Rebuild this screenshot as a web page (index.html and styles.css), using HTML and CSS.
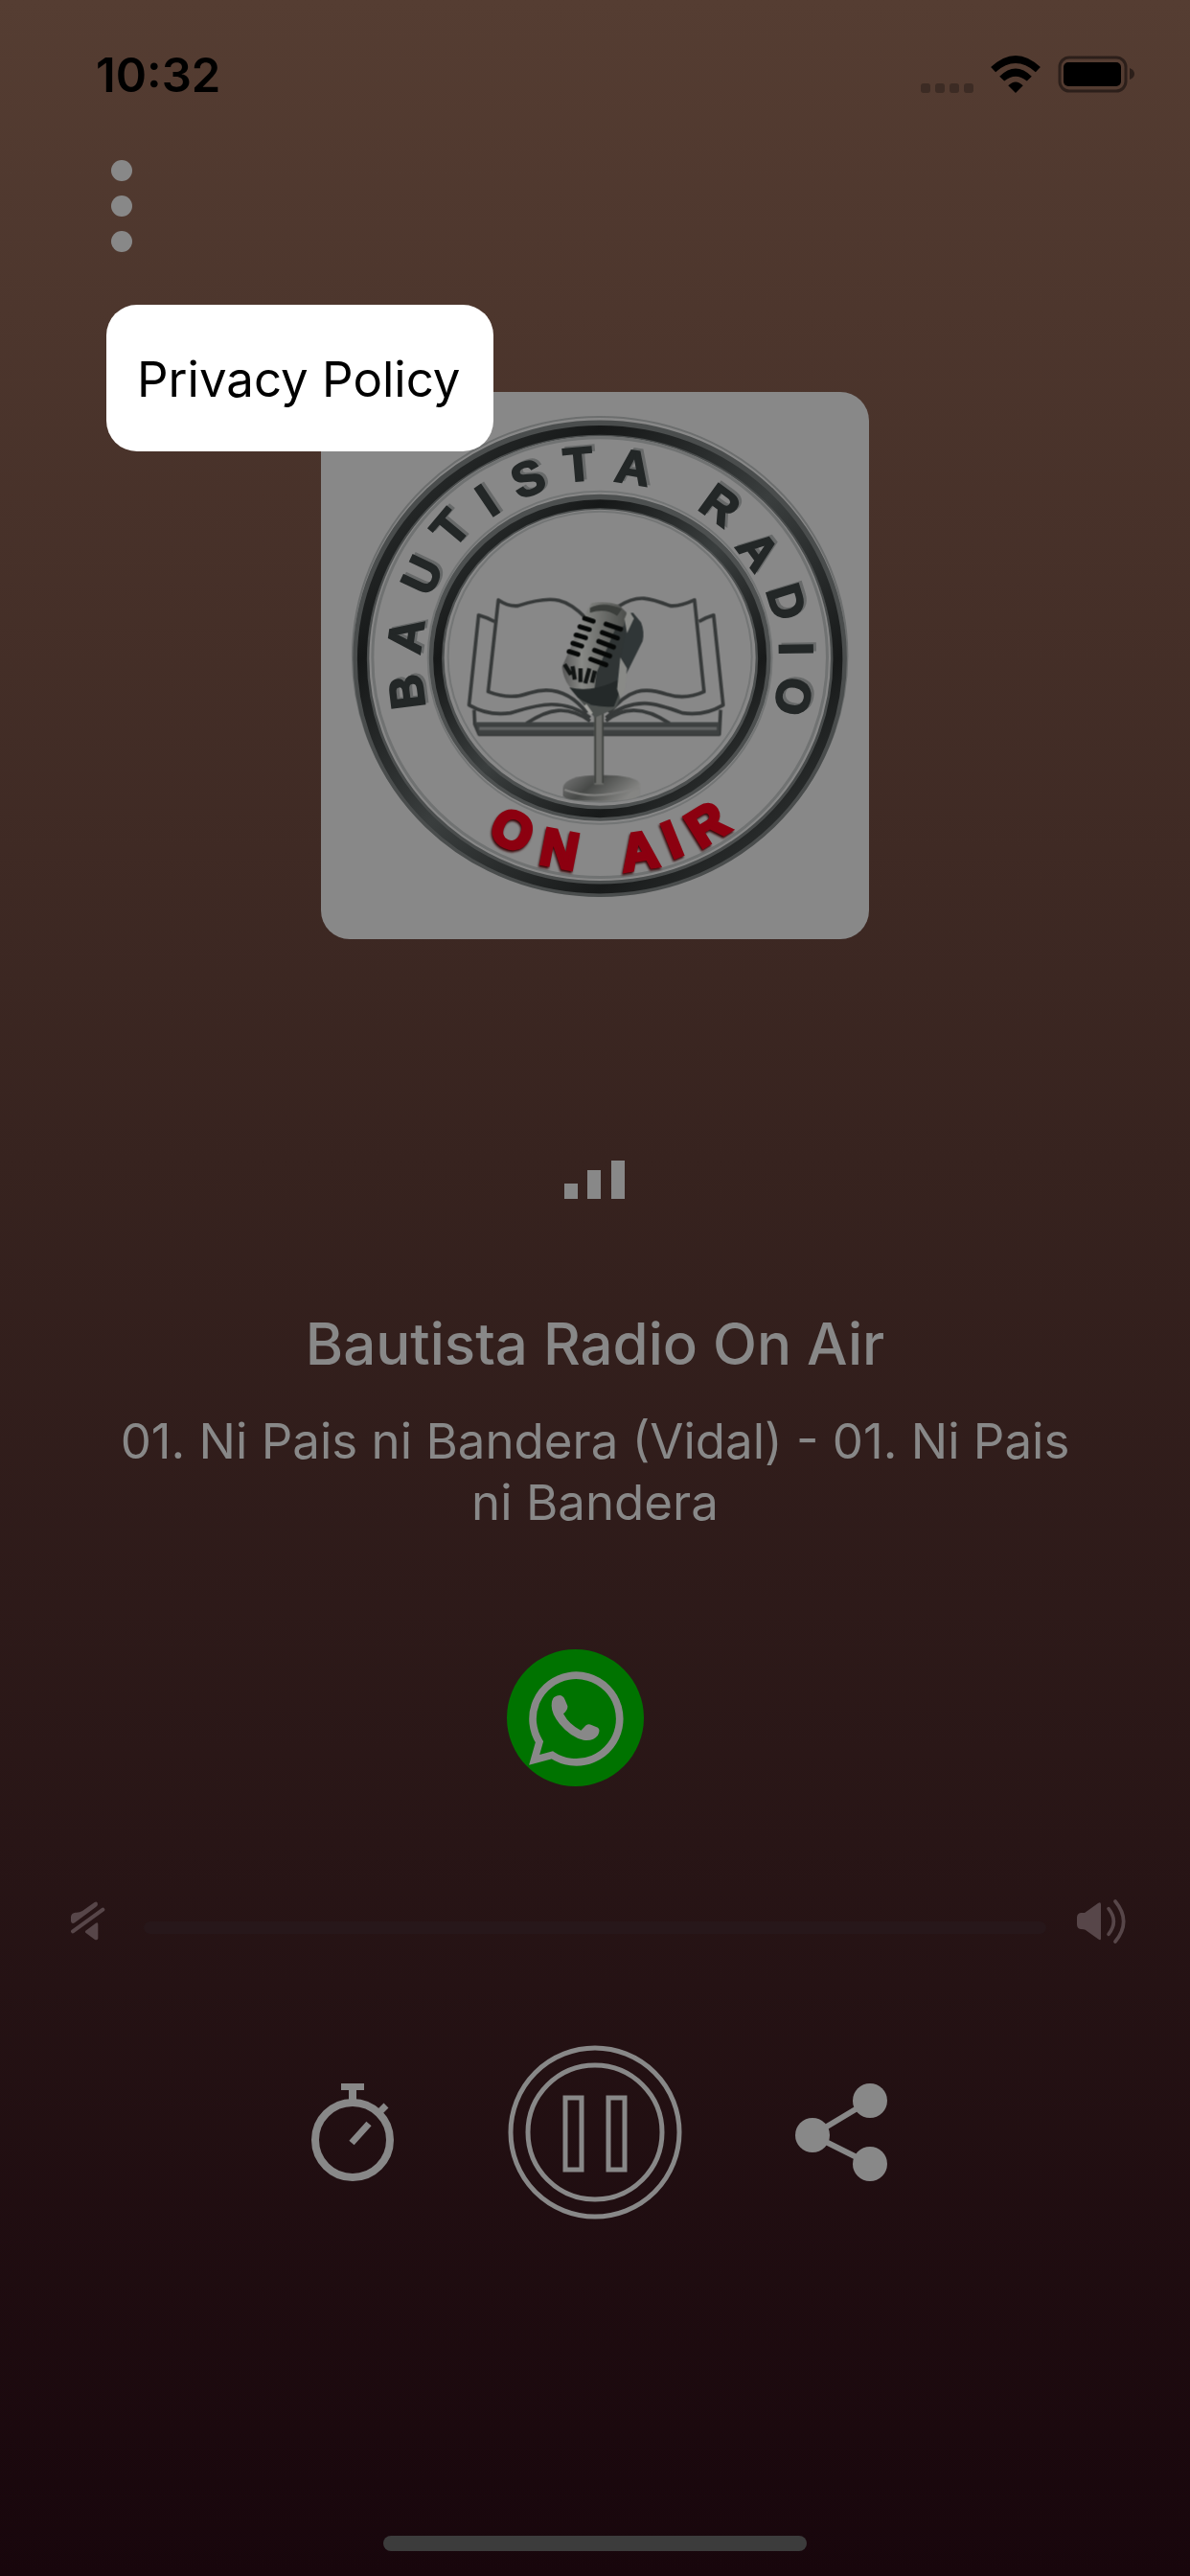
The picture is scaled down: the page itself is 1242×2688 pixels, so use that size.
FILE: index.html
```
<!DOCTYPE html>
<html lang="en">
<head>
    <meta charset="UTF-8">
    <meta name="viewport" content="width=device-width, initial-scale=1.0">
    <title>Bautista Radio On Air</title>
    <link rel="stylesheet" href="styles.css">
</head>
<body>
    <div class="status-bar">
        <span class="time">10:32</span>
        <div class="status-icons">
            <svg class="cell" width="55" height="10" viewBox="0 0 55 10">
                <rect width="10" height="10" rx="3"/>
                <rect x="15" width="10" height="10" rx="3"/>
                <rect x="30" width="10" height="10" rx="3"/>
                <rect x="45" width="10" height="10" rx="3"/>
            </svg>
            <svg class="wifi" width="52" height="39" viewBox="0 0 154 116">
                <path d="M0 36Q77 -36 154 36L139 51Q77 -3 15 51Z"/>
                <path d="M27 65Q77 16 127 65L112 79Q77 50 42 79Z"/>
                <path d="M54 93Q77 70 100 93L77 116Z"/>
            </svg>
            <svg class="battery" width="80" height="39" viewBox="0 0 80 39">
                <rect class="battery-case" x="2" y="2" width="69" height="35" rx="10"/>
                <rect x="6" y="7" width="60" height="25" rx="5"/>
                <path class="battery-tip" d="M75 13Q80 15 80 19T75 25Z"/>
            </svg>
        </div>
    </div>

    <header class="toolbar">
        <button class="icon-button menu-button" aria-label="Menu" aria-expanded="true">
            <svg width="24" height="96" viewBox="0 0 24 96">
                <circle cx="12" cy="11" r="11"/>
                <circle cx="12" cy="48" r="11"/>
                <circle cx="12" cy="85" r="11"/>
            </svg>
        </button>
        <nav class="popup">
            <a href="#privacy">Privacy Policy</a>
        </nav>
    </header>

    <main class="player">
        <div class="artwork">
            <svg viewBox="0 0 573 573" role="img" aria-label="Bautista Radio logo">
                <defs>
                    <linearGradient id="body" x1="0" x2="1">
                        <stop offset="0" stop-color="#555"/>
                        <stop offset=".3" stop-color="#888986"/>
                        <stop offset="1" stop-color="#4c4e4b"/>
                    </linearGradient>
                    <linearGradient id="base" x1="0" x2="1" y2=".4">
                        <stop offset="0" stop-color="#777"/>
                        <stop offset=".45" stop-color="#474947"/>
                        <stop offset="1" stop-color="#858583"/>
                    </linearGradient>
                    <linearGradient id="ring" x1="0" y1="0" x2="1" y2="1">
                        <stop offset="0" stop-color="#343838"/>
                        <stop offset=".25" stop-color="#161818"/>
                        <stop offset=".5" stop-color="#3a3e3e"/>
                        <stop offset=".75" stop-color="#181a1a"/>
                        <stop offset="1" stop-color="#3a3e3e"/>
                    </linearGradient>
                </defs>

                <!-- rings -->
                <g fill="none">
                    <ellipse cx="292" cy="276" rx="259" ry="250" stroke="#6c6e6e" stroke-width="2"/>
                    <ellipse cx="292" cy="279" rx="250" ry="241" stroke="#4a4d4d" stroke-width="17"/>
                    <ellipse cx="292" cy="280" rx="249" ry="240" stroke="url(#ring)" stroke-width="10"/>
                    <ellipse cx="292" cy="278" rx="238" ry="230" stroke="#707272" stroke-width="3"/>
                    <ellipse cx="292" cy="278" rx="180" ry="174" stroke="#737575" stroke-width="2"/>
                    <ellipse cx="292" cy="278" rx="171" ry="163" stroke="#4d5050" stroke-width="16"/>
                    <ellipse cx="292" cy="279" rx="170" ry="162" stroke="url(#ring)" stroke-width="9"/>
                    <ellipse cx="292" cy="277" rx="159" ry="152" stroke="#747676" stroke-width="2"/>
                </g>

                <g class="ring-text">
                    <text y="19" transform="translate(88 314) rotate(-97)">B</text>
                    <text y="19" transform="translate(87 255) rotate(-82)">A</text>
                    <text y="19" transform="translate(104 191) rotate(-65)">U</text>
                    <text y="19" transform="translate(134 141) rotate(-50)">T</text>
                    <text y="19" transform="translate(173 112) rotate(-34)">I</text>
                    <text y="19" transform="translate(216 89) rotate(-20)">S</text>
                    <text y="19" transform="translate(269 74) rotate(-5)">T</text>
                    <text y="19" transform="translate(327 77) rotate(9)">A</text>
                    <text y="19" transform="translate(419 117) rotate(36)">R</text>
                    <text y="19" transform="translate(459 165) rotate(53)">A</text>
                    <text y="19" transform="translate(489 219) rotate(73)">D</text>
                    <text y="19" transform="translate(499 269) rotate(89)">I</text>
                    <text y="19" transform="translate(496 319) rotate(101)">O</text>
                </g>
                <g class="on-air">
                    <text y="20" transform="translate(201 457) rotate(25)">O</text>
                    <text y="20" transform="translate(250 477) rotate(11)">N</text>
                    <text y="20" transform="translate(333 479) rotate(-9)">A</text>
                    <text y="20" transform="translate(367 467) rotate(-22)">I</text>
                    <text y="20" transform="translate(403 451) rotate(-32)">R</text>
                </g>

                <g transform="translate(135 181) scale(.3333)">
                    <!-- open book -->
                    <g fill="none" stroke="#363939" stroke-width="11" stroke-linejoin="round">
                        <path d="M425 165C370 110 330 90 215 128Q185 132 152 110L120 398Q190 425 250 402C320 380 380 400 430 465"/>
                        <path d="M530 130C590 90 630 105 690 128Q720 132 768 110L798 398Q740 425 680 406C610 382 560 390 500 465"/>
                        <path d="M140 178Q115 165 90 158L60 440Q120 475 190 465C260 445 350 410 440 480"/>
                        <path d="M782 178Q805 165 828 158L858 440Q800 475 730 465C650 435 580 410 490 480"/>
                        <path d="M76 455L78 500L92 532H846L850 455"/>
                        <path d="M240 498C310 450 370 440 440 490M690 498C620 450 550 440 490 490"/>
                    </g>
                    <path d="M82 494H846V534H90Z" fill="#3d4040"/>
                    <path d="M92 514H838" stroke="#626464" stroke-width="10"/>
                    <!-- stand -->
                    <path d="M355 700Q360 660 475 660T598 690V720Q590 742 475 742T355 725Z" fill="url(#base)"/>
                    <path d="M360 706Q420 728 480 722T594 700" fill="none" stroke="#828280" stroke-width="6"/>
                    <rect x="453" y="450" width="29" height="240" fill="#6b6c69"/>
                    <path d="M456 450V685M480 450V685" stroke="#3c3f3c" stroke-width="5"/>
                    <path d="M400 415L455 480L520 450L545 395Z" fill="#4c504e"/>
                    <path d="M425 440L445 468" stroke="#a0a09c" stroke-width="10"/>
                    <!-- microphone head -->
                    <path d="M575 150L600 180Q612 210 605 240L550 350L510 445L440 440L520 160Z" fill="#303637"/>
                    <path d="M445 120Q490 112 530 125L555 150L500 410Q470 440 420 415Q360 390 352 320L430 145Z" fill="url(#body)"/>
                    <path d="M440 135Q480 112 540 138L525 160Q490 135 440 150Z" fill="#3b3e3b"/>
                    <path d="M520 200L555 190L510 420L450 425L460 340Z" fill="#303535"/>
                    <g stroke="#060807" stroke-width="15" stroke-linecap="round">
                        <path d="M423 168L450 177M408 194L438 203M396 220L426 229M386 246L414 255M374 272L402 281"/>
                        <path d="M490 186L536 202M478 212L526 230M467 240L514 258M454 268L502 286M442 296L490 314"/>
                    </g>
                    <path d="M360 312L380 345M385 318L392 360M410 325L410 368M438 325L425 372M455 332L446 370" stroke="#111413" stroke-width="13"/>
                    <path d="M375 385Q440 400 510 370L552 350L515 445Q440 450 400 415Z" fill="#242929"/>
                    <path d="M535 290L525 390L535 420L550 390L556 325Z" fill="#898a87"/>
                    <path d="M560 140L578 168L556 215L548 170Z" fill="#8b8c89"/>
                </g>
            </svg>
        </div>

        <svg class="level" width="64" height="40" viewBox="0 0 64 40">
            <rect y="24" width="14" height="16"/>
            <rect x="24" y="10" width="14" height="30"/>
            <rect x="49" width="14" height="40"/>
        </svg>

        <h1 class="station">Bautista Radio On Air</h1>
        <p class="track">01. Ni Pais ni Bandera (Vidal) - 01. Ni Pais ni Bandera</p>

        <a class="whatsapp" href="#whatsapp" aria-label="WhatsApp">
            <svg viewBox="0 0 429 429">
                <path class="bubble" d="M102 290A136 136 0 1 1 142 331L86 346Z"/>
                <path class="phone" d="M148 150Q172 135 182 158L190 177Q192 188 177 202Q195 236 232 254L248 238Q256 232 265 237L285 245Q294 252 285 269Q271 288 240 284Q200 275 165 233Q140 202 140 177Q140 158 148 150Z"/>
            </svg>
        </a>

        <div class="volume">
            <svg width="36" height="42" viewBox="0 0 108 126">
                <path d="M0 62V48Q2 36 14 35Q26 36 36 30L74 3Q84 -2 84 10Q84 14 78 18L12 67Q2 72 0 62Z"/>
                <path d="M6 94L100 26" stroke-width="12" stroke-linecap="round"/>
                <path d="M46 92L78 68Q85 64 85 72V116Q82 124 74 119L46 98Q43 95 46 92Z"/>
            </svg>
            <input class="volume-slider" type="range" min="0" max="100" value="0" aria-label="Volume">
            <svg width="52" height="46" viewBox="0 0 156 138">
                <path d="M12 42H24L66 12Q75 6 75 16V122Q75 130 66 124L26 95Q22 93 12 93Q0 91 0 78V56Q1 44 12 42Z"/>
                <g fill="none" stroke-width="11" stroke-linecap="round">
                    <path d="M99 29Q131 69 99 109"/>
                    <path d="M120 6Q172 69 120 132"/>
                </g>
            </svg>
        </div>

        <div class="controls">
            <button class="icon-button timer" aria-label="Sleep timer">
                <svg width="88" height="102" viewBox="0 0 88 102">
                    <circle class="line" cx="44" cy="59" r="39" stroke-width="8"/>
                    <path d="M32 0H56V7H48V18H40V7H32Z"/>
                    <path class="line" d="M71 31L79 23M43 62L61 42" stroke-width="7"/>
                </svg>
            </button>
            <button class="icon-button" aria-label="Pause">
                <svg width="182" height="182" viewBox="0 0 182 182">
                    <g class="line" stroke-width="5">
                        <circle cx="91" cy="91" r="88"/>
                        <circle cx="91" cy="91" r="70"/>
                        <rect x="60" y="55" width="17" height="75"/>
                        <rect x="105" y="55" width="17" height="75"/>
                    </g>
                </svg>
            </button>
            <button class="icon-button share" aria-label="Share">
                <svg width="96" height="102" viewBox="0 0 96 102">
                    <path class="line" d="M78 18L18 54L78 84" stroke-width="6"/>
                    <circle cx="78" cy="18" r="18"/>
                    <circle cx="18" cy="54" r="18"/>
                    <circle cx="78" cy="84" r="18"/>
                </svg>
            </button>
        </div>
    </main>

    <div class="home-indicator"></div>
</body>
</html>
```
FILE: styles.css
```
* {
    box-sizing: border-box;
}
body {
    margin: 0;
    min-height: 100vh;
    display: flex;
    flex-direction: column;
    background: linear-gradient(#553d32, #37231f 45%, #18060c);
    color: #888;
    font-family: Inter, "Liberation Sans", sans-serif;
}
svg {
    display: block;
}
.status-bar {
    display: flex;
    justify-content: space-between;
    padding: 49px 58px 0 100px;
    color: #000;
}
.time {
    font-size: 49px;
    font-weight: 600;
    line-height: 60px;
}
.status-icons {
    display: flex;
    align-items: flex-end;
    gap: 18px;
    height: 48px;
}
.cell {
    fill: #3c2b24;
}
.battery-case {
    fill: none;
    stroke: #2c1f1a;
    stroke-width: 3;
}
.battery-tip {
    fill: #2c1f1a;
}
.toolbar {
    position: relative;
    padding: 58px 115px 0;
}
.icon-button {
    display: block;
    padding: 0;
    border: none;
    background: none;
    fill: #888;
    cursor: pointer;
}
.popup {
    position: absolute;
    top: 209px;
    left: 111px;
    padding: 46px 34px 43px 32px;
    border-radius: 32px;
    background: #fff;
    font-size: 51px;
    line-height: 64px;
    z-index: 1;
}
.popup a {
    color: #000;
    text-decoration: none;
}
.player {
    display: flex;
    flex-direction: column;
    align-items: center;
    padding-top: 146px;
}
.artwork {
    width: 46%;
    border-radius: 30px;
    background: #888;
    overflow: hidden;
}
.ring-text {
    fill: #232727;
    stroke: #232727;
    stroke-width: 2;
    font: bold 50px "Liberation Sans", sans-serif;
    text-anchor: middle;
    filter: drop-shadow(3px -2px 0 #676969);
}
.on-air {
    fill: #8c0010;
    stroke: #8c0010;
    stroke-width: 4;
    font: bold 54px "Liberation Sans", sans-serif;
    text-anchor: middle;
    filter: drop-shadow(-1px 2px 1px #3a0608);
}
.level {
    margin-top: 231px;
    fill: #888;
}
.station {
    margin: 113px 0 0;
    font-size: 60px;
    font-weight: 500;
    line-height: 76px;
}
.track {
    margin: 32px 0 0;
    padding: 0 100px;
    font-size: 51px;
    line-height: 64px;
    text-align: center;
}
.whatsapp {
    width: 143px;
    margin: 121px 41px 0 0;
    border-radius: 50%;
    background: #007300;
}
.bubble {
    fill: none;
    stroke: #888;
    stroke-width: 23;
}
.phone {
    fill: #888;
}
.volume {
    display: flex;
    align-items: center;
    gap: 32px;
    align-self: stretch;
    margin-top: 118px;
    padding: 0 66px 0 74px;
    fill: #574649;
    stroke: #574649;
    stroke-width: 0;
}
.volume-slider {
    flex: 1;
    height: 13px;
    margin: 12px 0 0 8px;
    border-radius: 7px;
    background: #27171a;
    appearance: none;
}
.volume-slider::-webkit-slider-thumb {
    width: 0;
    appearance: none;
}
.controls {
    display: grid;
    grid-template-columns: 1fr auto 1fr;
    align-items: center;
    align-self: stretch;
    column-gap: 118px;
    margin-top: 106px;
}
.timer {
    justify-self: end;
}
.line {
    fill: none;
    stroke: #888;
}
.home-indicator {
    width: 442px;
    height: 16px;
    margin: auto auto 26px;
    border-radius: 8px;
    background: #3c3c3c;
}
```
